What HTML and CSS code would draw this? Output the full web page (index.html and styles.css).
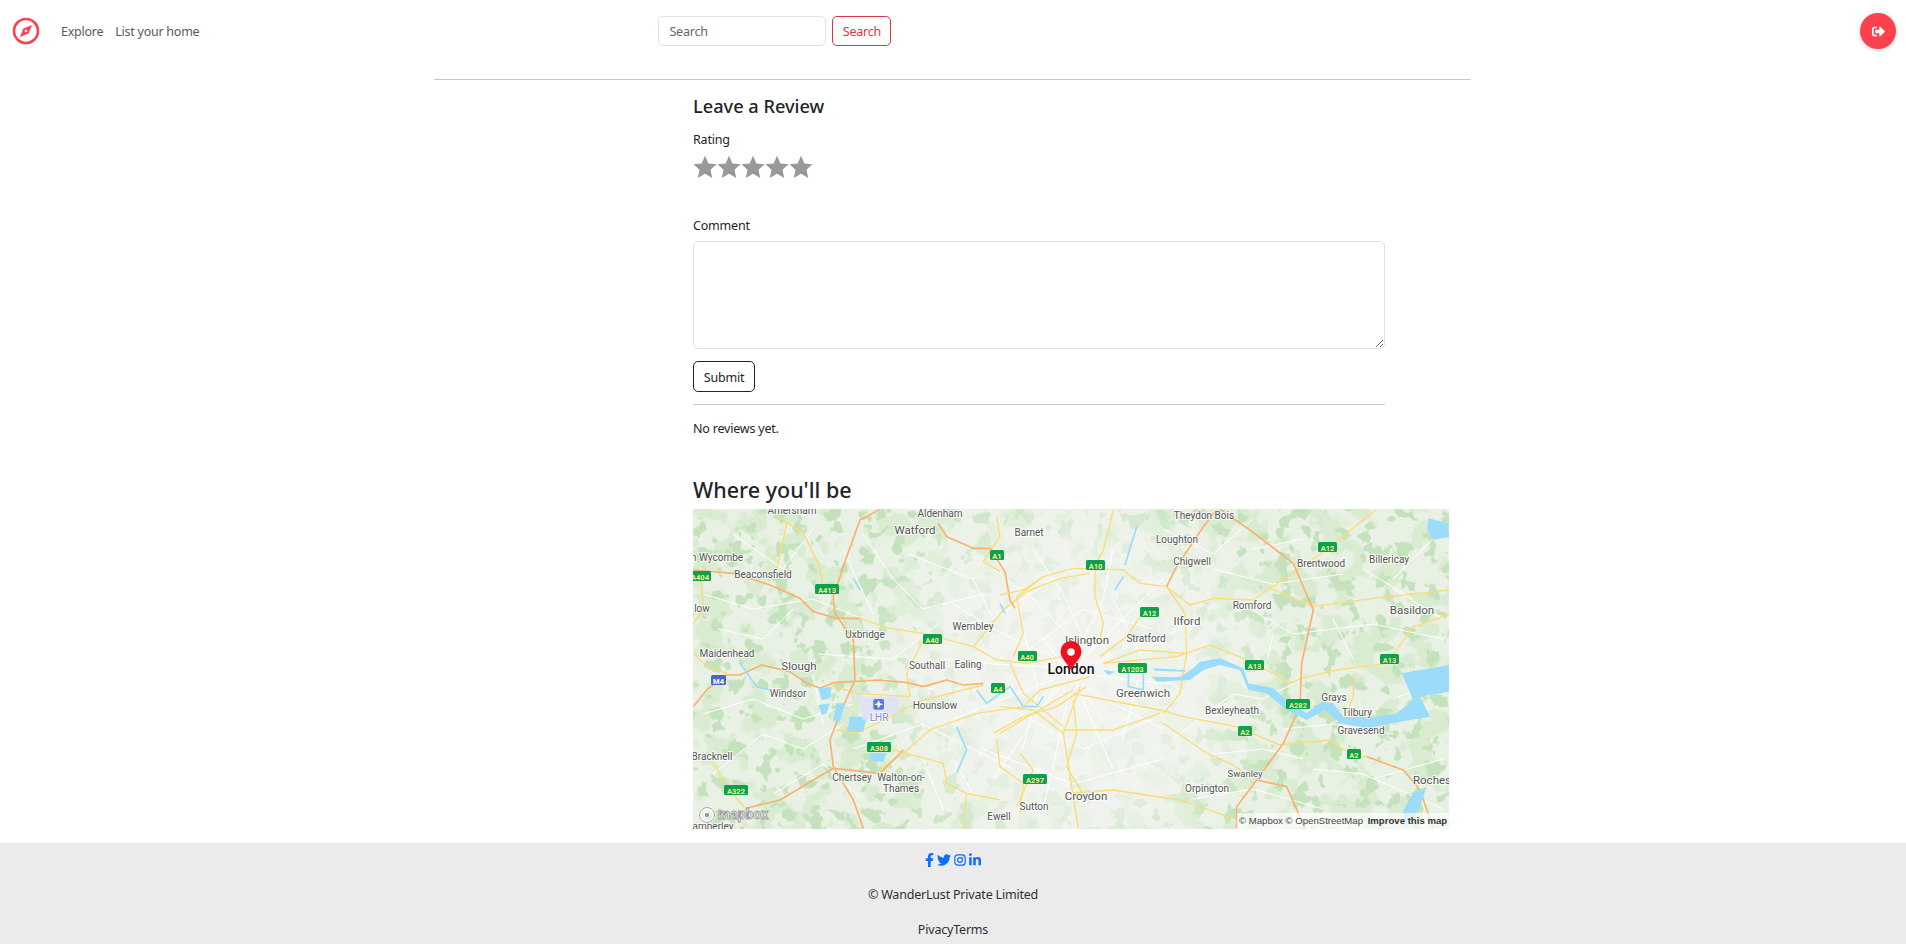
FILE: index.html
```html
<!DOCTYPE html>
<html lang="en">
<head>
    <meta charset="UTF-8">
    <title>Leave a Review</title>
    <link rel="stylesheet" href="styles.css">
</head>
<body>
    <nav class="navbar">
        <a class="brand" href="#">
            <svg viewBox="0 0 28 28" width="28" height="28">
                <circle cx="14" cy="14" r="12" fill="none" stroke="#fe424d" stroke-width="2.6"/>
                <path d="M20 8 L16.6 16.6 L8 20 L11.4 11.4 Z" fill="#fe424d"/>
                <circle cx="14" cy="14" r="1.3" fill="#fff"/>
            </svg>
        </a>
        <a class="nav-link" href="#">Explore</a>
        <a class="nav-link" href="#">List your home</a>
        <form class="search">
            <input class="search-input" type="text" placeholder="Search">
            <button class="search-btn" type="button">Search</button>
        </form>
        <a class="logout" href="#">
            <svg viewBox="0 0 512 512" width="13" height="13"><path fill="#fff" d="M497 273L329 441c-15 15-41 4.5-41-17v-96H152c-13.3 0-24-10.7-24-24v-96c0-13.3 10.7-24 24-24h136V88c0-21.4 25.9-32 41-17l168 168c9.3 9.4 9.3 24.6 0 34zM192 436v-40c0-6.6-5.4-12-12-12H96c-17.7 0-32-14.3-32-32V160c0-17.7 14.3-32 32-32h84c6.6 0 12-5.4 12-12V76c0-6.6-5.4-12-12-12H96c-53 0-96 43-96 96v192c0 53 43 96 96 96h84c6.6 0 12-5.4 12-12z"/></svg>
        </a>
    </nav>

    <main class="content">
        <hr class="top-line">
        <div class="column">
            <div class="review">
                <h4 class="review-title">Leave a Review</h4>
                <label class="field-label">Rating</label>
                <div class="stars">
                    <svg viewBox="0 0 24 24"><path d="M12 .8l3.4 7.6 8.2.9-6.1 5.5 1.7 8.1L12 18.8l-7.2 4.1 1.7-8.1L.4 9.3l8.2-.9z"/></svg>
                    <svg viewBox="0 0 24 24"><path d="M12 .8l3.4 7.6 8.2.9-6.1 5.5 1.7 8.1L12 18.8l-7.2 4.1 1.7-8.1L.4 9.3l8.2-.9z"/></svg>
                    <svg viewBox="0 0 24 24"><path d="M12 .8l3.4 7.6 8.2.9-6.1 5.5 1.7 8.1L12 18.8l-7.2 4.1 1.7-8.1L.4 9.3l8.2-.9z"/></svg>
                    <svg viewBox="0 0 24 24"><path d="M12 .8l3.4 7.6 8.2.9-6.1 5.5 1.7 8.1L12 18.8l-7.2 4.1 1.7-8.1L.4 9.3l8.2-.9z"/></svg>
                    <svg viewBox="0 0 24 24"><path d="M12 .8l3.4 7.6 8.2.9-6.1 5.5 1.7 8.1L12 18.8l-7.2 4.1 1.7-8.1L.4 9.3l8.2-.9z"/></svg>
                </div>
                <label class="field-label comment-label">Comment</label>
                <textarea class="comment-box"></textarea>
                <button class="submit-btn" type="button">Submit</button>
                <hr class="review-line">
                <p class="no-reviews">No reviews yet.</p>
            </div>
            <h3 class="map-title">Where you'll be</h3>
            <div class="map">
                <svg class="map-canvas" viewBox="0 0 756 320" width="756" height="320">
                    <defs>
                        <filter id="patches" x="0" y="0" width="100%" height="100%" color-interpolation-filters="sRGB">
                            <feTurbulence type="fractalNoise" baseFrequency="0.035" numOctaves="3" seed="7"/>
                            <feColorMatrix type="matrix" values="0 0 0 0 0.85  0 0 0 0 0.925  0 0 0 0 0.82  16 0 0 0 -8.3"/>
                        </filter>
                        <filter id="patches2" x="0" y="0" width="100%" height="100%" color-interpolation-filters="sRGB">
                            <feTurbulence type="fractalNoise" baseFrequency="0.06" numOctaves="3" seed="23"/>
                            <feColorMatrix type="matrix" values="0 0 0 0 0.77  0 0 0 0 0.89  0 0 0 0 0.74  18 0 0 0 -10.6"/>
                        </filter>
                        <radialGradient id="city" cx="378" cy="170" r="215" gradientUnits="userSpaceOnUse">
                            <stop offset="0" stop-color="#f5f5f3" stop-opacity=".92"/>
                            <stop offset=".6" stop-color="#f5f5f3" stop-opacity=".65"/>
                            <stop offset="1" stop-color="#f5f5f3" stop-opacity="0"/>
                        </radialGradient>
                    </defs>
                    <rect width="756" height="320" fill="#e9f1e4"/>
                    <rect width="756" height="320" filter="url(#patches)"/>
                    <rect width="756" height="320" filter="url(#patches2)"/>
                    <rect width="756" height="320" fill="url(#city)"/>

                    <!-- minor roads -->
                    <g class="minor">
                        <path d="M300 60 L340 90 L378 130 M340 40 L370 85 L395 140 M420 40 L410 90 L385 140 M470 70 L430 110 L395 145 M490 120 L430 140 L400 155 M480 175 L430 170 L395 165 M470 220 L420 195 L390 175 M420 260 L400 215 L385 180 M350 300 L365 235 L377 180 M300 270 L335 220 L365 175 M260 210 L310 190 L362 170 M250 150 L300 155 L360 158 M260 95 L310 125 L365 150"/>
                        <path d="M330 120 L345 180 L330 240 M420 90 L450 150 L430 230 M310 160 L390 100 L460 120 M320 200 L390 240 L460 210 M300 110 L360 70 L430 60 M290 240 L380 275 L470 250 M350 130 L410 210 M410 125 L345 205"/>
                        <path d="M40 25 L90 60 L120 20 M10 85 L60 100 L120 90 L170 110 M25 120 L70 130 L100 100 M10 205 L60 190 L110 210 L160 195 M20 265 L70 225 L110 240 L150 215 M80 285 L130 255 L170 290 M170 25 L200 70 L230 100 L290 85 M150 40 L180 105 M215 45 L280 70 L300 110 M125 145 L200 150 L245 115 M190 170 L240 180 M120 165 L130 215 M160 240 L230 215 L270 235 L320 260 M230 250 L250 300 M280 285 L260 250"/>
                        <path d="M470 20 L520 45 L560 10 M520 60 L580 75 L650 65 M560 40 L610 30 M540 90 L600 125 L680 115 L750 130 M580 125 L575 150 M640 110 L660 150 M700 70 L740 30 M700 80 L750 110 M670 60 L720 90 M480 230 L540 185 L570 190 L600 175 M520 245 L570 240 L610 250 M590 220 L640 215 L700 225 M620 260 L670 265 L750 300 M500 290 L560 280 L630 300 M680 270 L750 250 M700 190 L750 170"/>
                    </g>

                    <!-- west half, coordinates read off a 3x crop -->
                    <g transform="translate(-3,-9) scale(.3333)">
                        <g class="r-yellow">
                            <path d="M510 355 L600 385 L700 400 L850 440 L920 480 L1010 490 L1120 470"/>
                            <path d="M850 440 L940 330 L1010 275 L1110 235 L1200 220"/>
                            <path d="M265 50 L340 100 L385 190 L400 260 M290 70 L260 210"/>
                            <path d="M880 555 L700 600 L620 640 L500 700 L440 690"/>
                            <path d="M660 590 L500 580 L420 555 M660 590 L650 520 L700 420"/>
                            <path d="M920 50 L930 110 L880 185 L930 215 M10 370 L40 330 L35 240"/>
                            <path d="M1200 530 L1050 570 L1000 620 L860 640 L720 690 L640 760 L570 810"/>
                            <path d="M910 700 L1000 650 L1100 620 L1190 560 M920 720 L930 800 L1000 850 L990 940 M830 880 L820 985"/>
                            <path d="M610 750 L760 790 L770 850 L830 880 L930 900 M60 770 L110 860 L170 930 M1150 600 L1160 700 L1130 800 L1190 900"/>
                            <path d="M960 490 L1000 580 L1060 630 L1120 680"/>
                            <path d="M10 460 L50 500 L110 520"/>
                        </g>
                        <g class="r-orange">
                            <path d="M520 985 L490 900 L430 800 L420 720 L450 640 L495 540 L490 420 L435 340 L430 290 L470 170 L510 60 L570 28"/>
                            <path d="M10 620 L50 570 L110 525 L150 525 L215 495 L300 515 L350 550 L390 565 L430 548 L570 540 L650 548 L700 560 L770 540 L820 555 L880 550"/>
                            <path d="M10 210 L130 220 L240 255 L330 295 L370 335 L440 355 L510 355"/>
                            <path d="M745 70 L770 110 L850 145 L900 145 L945 215 L960 300 L975 325"/>
                            <path d="M170 925 L270 900 L370 840 L430 805 L570 820 L640 750"/>
                        </g>
                        <path class="r-water" d="M490 235 L510 270 M930 310 L945 340 M150 490 L200 560 L240 570"/>
                        <path class="water" d="M385 565 L425 560 L420 595 L395 600 Z M385 615 L420 610 L410 640 L395 645 Z M440 610 L465 610 L450 665 L430 660 Z M478 650 L530 650 L520 695 L475 695 Z M535 760 L590 760 L580 785 L550 785 Z"/>
                        <path class="r-water" d="M800 680 L830 750 L800 820 M860 570 L890 610 L960 560 L1000 620 L1040 620 L1060 590"/>
                        <path d="M505 590 L625 590 L625 640 L520 660 Z" fill="#dfe3f2"/>
                        <rect x="550" y="597" width="32" height="32" rx="6" fill="#5b78d8"/>
                        <path d="M566 600 L570 610 L580 613 L570 616 L566 626 L562 616 L552 613 L562 610 Z" fill="#fff"/>
                    </g>

                    <!-- east half -->
                    <g transform="translate(307,-9) scale(.3333)">
                        <g class="r-yellow">
                            <path d="M0 285 L70 270 L130 230 L220 205 L370 210 L420 250 L500 260 L570 315 L640 295 L760 300 L810 265 L940 320 L1120 295 L1347 270"/>
                            <path d="M310 490 L420 450 L560 460 M310 490 L530 470 L630 435 L740 480 L820 520 L870 550 L905 535 L1010 510 L1160 490 L1240 380 L1347 345"/>
                            <path d="M560 460 L555 340 L500 260 M560 460 L540 580 L490 640"/>
                            <path d="M220 580 L320 600 L480 630 L550 650 L710 680 L840 735 L990 720 L1060 770 L1100 770"/>
                            <path d="M240 560 L190 700 L235 985 M0 700 L100 640 L220 570 M0 620 L100 630 L190 700"/>
                            <path d="M490 670 L620 760 L690 790 L770 840"/>
                            <path d="M810 265 L950 170 L1040 100 L1127 30 M340 30 L310 150 L285 200 L285 290 L310 370 L300 420"/>
                            <path d="M190 690 L340 690 L480 640 M60 760 L100 810 L50 920 M200 880 L340 870 L540 900 L700 955"/>
                            <path d="M130 230 L50 290 L70 400 L40 470 M420 350 L380 410 L300 470 M1060 530 L1060 590 L1035 650"/>
                        </g>
                        <g class="r-orange">
                            <path d="M660 28 L750 90 L880 190 L940 330 L905 490 L900 620 L850 730 L770 840 L710 920 L710 985"/>
                            <path d="M500 260 L530 200 L610 80 L650 30"/>
                            <path d="M770 840 L860 860 L915 985 M1100 770 L1210 810 L1260 870 L1300 985"/>
                        </g>
                        <path class="r-water" d="M375 195 L410 80 M345 270 L370 230"/>
                        <path class="water" d="M310 510 L345 515 L325 525 Z M460 505 L555 510 L555 515 L465 512 Z M455 530 L540 532 L580 505 L600 485 L660 475 L730 505 L745 550 L820 565 L870 610 L920 640 L965 605 L1000 610 L1030 650 L1130 650 L1190 640 L1240 600 L1205 520 L1347 495 L1347 575 L1260 590 L1290 650 L1200 665 L1100 685 L1020 670 L975 630 L920 660 L860 630 L800 580 L745 570 L720 510 L660 495 L610 510 L570 540 L470 545 Z"/>
                        <path class="r-water" d="M385 515 L385 560 L430 570 L430 520"/>
                        <path class="water" d="M1285 55 L1345 70 L1347 110 L1300 120 L1282 90 Z M1240 880 L1280 860 L1260 920 L1215 985 L1210 930 Z"/>
                    </g>

                    <g class="shields">
                        <rect x="-8" y="62" width="26" height="10"/><text x="7" y="70.5">A404</text>
                        <rect x="122" y="75" width="24" height="10"/><text x="134" y="83.5">A413</text>
                        <rect x="297" y="41" width="14" height="10"/><text x="304" y="49.5">A1</text>
                        <rect x="230" y="125" width="19" height="10"/><text x="239" y="133.5">A40</text>
                        <rect x="325" y="142" width="19" height="10"/><text x="334" y="150.5">A40</text>
                        <rect x="298" y="174" width="14" height="10"/><text x="305" y="182.5">A4</text>
                        <rect class="blue" x="18" y="166" width="15" height="10"/><text x="25.500" y="174.500">M4</text>
                        <rect x="174" y="233" width="24" height="10"/><text x="186" y="241.500">A308</text>
                        <rect x="31" y="276" width="24" height="10"/><text x="43" y="284.500">A322</text>
                        <rect x="330" y="265" width="24" height="10"/><text x="342" y="273.500">A297</text>
                        <rect x="393" y="51" width="19" height="10"/><text x="402.500" y="59.500">A10</text>
                        <rect x="447" y="98" width="19" height="10"/><text x="456.500" y="106.500">A12</text>
                        <rect x="425" y="154" width="29" height="10"/><text x="439.500" y="162.500">A1203</text>
                        <rect x="552" y="151" width="19" height="10"/><text x="561.500" y="159.500">A13</text>
                        <rect x="593" y="190" width="24" height="10"/><text x="605" y="198.500">A282</text>
                        <rect x="545" y="217" width="14" height="10"/><text x="552" y="225.500">A2</text>
                        <rect x="654" y="240" width="14" height="10"/><text x="661" y="248.500">A2</text>
                        <rect x="625" y="33" width="19" height="10"/><text x="634.500" y="41.500">A12</text>
                        <rect x="687" y="145" width="19" height="10"/><text x="696.500" y="153.500">A13</text>
                    </g>

                    <g class="labels">
                        <text x="99" y="5">Amersham</text>
                        <text x="247" y="8">Aldenham</text>
                        <text class="lg" x="222" y="25">Watford</text>
                        <text x="336" y="27">Barnet</text>
                        <text x="24" y="52">h Wycombe</text>
                        <text x="70" y="69">Beaconsfield</text>
                        <text x="172" y="129">Uxbridge</text>
                        <text x="280" y="121">Wembley</text>
                        <text x="34" y="148">Maidenhead</text>
                        <text class="lg" x="106" y="161">Slough</text>
                        <text x="234" y="160">Southall</text>
                        <text x="275" y="159">Ealing</text>
                        <text x="95" y="188">Windsor</text>
                        <text x="242" y="200">Hounslow</text>
                        <text class="lhr" x="186" y="212">LHR</text>
                        <text x="19" y="251">Bracknell</text>
                        <text x="159" y="272">Chertsey</text>
                        <text x="208" y="272">Walton-on-</text>
                        <text x="208" y="283">Thames</text>
                        <text x="20" y="321">amberley</text>
                        <text x="306" y="311">Ewell</text>
                        <text x="341" y="301">Sutton</text>
                        <text class="lg" x="393" y="291">Croydon</text>
                        <text x="9" y="103">low</text>
                        <text x="511" y="10">Theydon Bois</text>
                        <text x="484" y="34">Loughton</text>
                        <text x="499" y="56">Chigwell</text>
                        <text x="628" y="58">Brentwood</text>
                        <text x="696" y="54">Billericay</text>
                        <text x="559" y="100">Romford</text>
                        <text class="lg" x="719" y="105">Basildon</text>
                        <text class="lg" x="494" y="116">Ilford</text>
                        <text x="453" y="133">Stratford</text>
                        <text class="lg" x="394" y="135">Islington</text>
                        <text class="lg" x="450" y="188">Greenwich</text>
                        <text x="641" y="192">Grays</text>
                        <text x="664" y="207">Tilbury</text>
                        <text x="668" y="225">Gravesend</text>
                        <text x="539" y="205">Bexleyheath</text>
                        <text class="sm" x="552" y="268">Swanley</text>
                        <text x="514" y="283">Orpington</text>
                        <text class="lg" x="739" y="275">Roches</text>
                        <text class="city" x="378" y="165">London</text>
                    </g>

                    <!-- marker -->
                    <path d="M378 161 C374 154 367.500 149 367.500 142.500 A10.500 10.500 0 0 1 388.500 142.500 C388.500 149 382 154 378 161 Z" fill="#f01020"/>
                    <circle cx="378" cy="143" r="3.800" fill="#fff"/>

                    <!-- mapbox logo -->
                    <circle cx="14" cy="306" r="7" fill="none" stroke="#fff" stroke-width="3.500"/>
                    <circle cx="14" cy="306" r="7.500" fill="none" stroke="#888" stroke-width=".8"/>
                    <circle cx="14" cy="306" r="2.800" fill="#999" stroke="#fff"/>
                    <text class="logo-text" x="25" y="310">mapbox</text>
                </svg>
                <div class="attribution">© Mapbox © OpenStreetMap <b>Improve this map</b></div>
            </div>
        </div>
    </main>

    <footer class="footer">
        <div class="socials">
            <svg viewBox="0 0 320 512" width="9" height="14"><path d="M279.14 288l14.22-92.66h-88.91v-60.13c0-25.35 12.42-50.06 52.24-50.06h40.42V6.26S260.43 0 225.36 0c-73.22 0-121.08 44.38-121.08 124.72v70.62H22.89V288h81.39v224h100.17V288z"/></svg>
            <svg viewBox="0 0 512 512" width="14" height="14"><path d="M459.37 151.716c.325 4.548.325 9.097.325 13.645 0 138.72-105.583 298.558-298.558 298.558-59.452 0-114.68-17.219-161.137-47.106 8.447.974 16.568 1.299 25.34 1.299 49.055 0 94.213-16.568 130.274-44.832-46.132-.975-84.792-31.188-98.112-72.772 6.498.974 12.995 1.624 19.818 1.624 9.421 0 18.843-1.3 27.614-3.573-48.081-9.747-84.143-51.98-84.143-102.985v-1.299c13.969 7.797 30.214 12.67 47.431 13.319-28.264-18.843-46.781-51.005-46.781-87.391 0-19.492 5.197-37.36 14.294-52.954 51.655 63.675 129.3 105.258 216.365 109.807-1.624-7.797-2.599-15.918-2.599-24.04 0-57.828 46.782-104.934 104.934-104.934 30.213 0 57.502 12.67 76.67 33.137 23.715-4.548 46.456-13.32 66.599-25.34-7.798 24.366-24.366 44.833-46.132 57.827 21.117-2.273 41.584-8.122 60.426-16.243-14.292 20.791-32.161 39.308-52.628 54.253z"/></svg>
            <svg viewBox="0 0 14 14" width="12" height="14"><rect class="ig" x="1" y="1" width="12" height="12" rx="3.200"/><circle class="ig" cx="7" cy="7" r="2.800"/><circle cx="10.400" cy="3.600" r=".8"/></svg>
            <svg viewBox="0 0 448 512" width="12" height="14"><path d="M100.28 448H7.4V148.9h92.88zM53.79 108.1C24.09 108.1 0 83.5 0 53.8a53.79 53.79 0 0 1 107.58 0c0 29.7-24.1 54.3-53.79 54.3zM447.9 448h-92.68V302.4c0-34.7-.7-79.2-48.29-79.2-48.29 0-55.69 37.7-55.69 76.7V448h-92.78V148.9h89.08v40.8h1.3c12.4-23.5 42.69-48.3 87.88-48.3 94 0 111.28 61.9 111.28 142.3V448z"/></svg>
        </div>
        <div class="copyright">© WanderLust Private Limited</div>
        <div class="links"><a href="#">Pivacy</a><a href="#">Terms</a></div>
    </footer>
</body>
</html>
```

FILE: styles.css
```css
* {
    box-sizing: border-box;
}
body {
    margin: 0;
    height: 944px;
    overflow: hidden;
    display: flex;
    flex-direction: column;
    font-family: "Noto Sans", "Liberation Sans", sans-serif;
    font-size: 12.5px;
    letter-spacing: -.2px;
    color: #212529;
    background: #fff;
}
a {
    text-decoration: none;
    color: inherit;
}

/* navbar */
.navbar {
    display: flex;
    align-items: center;
    height: 62px;
    padding: 0 10px 0 12px;
}
.brand {
    display: flex;
    width: 49px;
}
.nav-link {
    color: #555b61;
    margin-right: 12px;
    letter-spacing: -.25px;
}
.search {
    display: flex;
    gap: 6px;
    margin-left: 447px;
}
.search-input {
    width: 168px;
    height: 30px;
    padding: 0 10px;
    border: 1px solid #dee2e6;
    border-radius: 5px;
    font: inherit;
    letter-spacing: inherit;
}
.search-input::placeholder {
    color: #60666c;
    opacity: 1;
}
.search-btn {
    width: 59px;
    height: 30px;
    padding: 0;
    border: 1px solid #dc3545;
    border-radius: 5px;
    background: #fff;
    color: #dc3545;
    font: inherit;
    letter-spacing: inherit;
}
.logout {
    display: flex;
    align-items: center;
    justify-content: center;
    width: 36px;
    height: 36px;
    margin-left: auto;
    border-radius: 50%;
    background: #fe424d;
    box-shadow: 0 1px 4px rgba(0,0,0,.2);
}

/* main */
.content {
    width: 1037px;
    margin: 0 0 0 434px;
    flex: 1;
}
.top-line {
    margin: 17px 0 0;
    border: 0;
    border-top: 1px solid #c9c9c9;
}
.column {
    margin-left: 259px;
}
.review {
    width: 692px;
}
.review-title {
    margin: 14px 0 0;
    font-size: 18.2px;
    font-weight: 500;
    line-height: 24px;
    letter-spacing: 0;
}
.field-label {
    display: block;
    line-height: 18px;
}
.review-title + .field-label {
    margin-top: 13px;
}
.stars {
    display: flex;
    height: 24px;
    margin-top: 6px;
}
.stars svg {
    width: 24px;
    height: 24px;
    fill: #999;
}
.comment-label {
    margin-top: 38px;
}
.comment-box {
    display: block;
    width: 100%;
    height: 108px;
    margin-top: 6px;
    border: 1px solid #dee2e6;
    border-radius: 5px;
}
.submit-btn {
    display: block;
    width: 62px;
    height: 31px;
    margin-top: 12px;
    padding: 1px 0 0;
    border: 1px solid #212529;
    border-radius: 5px;
    background: #fff;
    color: #212529;
    font: inherit;
    letter-spacing: inherit;
}
.review-line {
    margin: 12px 0 0;
    border: 0;
    border-top: 1px solid #c9c9c9;
}
.no-reviews {
    margin: 15px 0 0;
    line-height: 18px;
}
.map-title {
    margin: 37px 0 0;
    font-size: 21.5px;
    font-weight: 500;
    line-height: 30px;
    letter-spacing: 0;
}
.map {
    position: relative;
    width: 756px;
    height: 320px;
    margin-top: 4px;
    overflow: hidden;
}
.map-canvas {
    display: block;
}
.attribution {
    position: absolute;
    right: 0;
    bottom: 0;
    width: 212px;
    height: 16px;
    padding-left: 2px;
    background: rgba(255,255,255,.65);
    font-family: "Liberation Sans", sans-serif;
    font-size: 9.6px;
    letter-spacing: 0;
    line-height: 16px;
    white-space: nowrap;
    color: #444;
}
.attribution b {
    color: #333;
    margin-left: 2px;
}

/* map drawing */
.minor path {
    fill: none;
    stroke: #fff;
    stroke-width: 1;
    stroke-linejoin: round;
}
.r-yellow path {
    fill: none;
    stroke: #fbdc75;
    stroke-width: 4;
    stroke-linejoin: round;
}
.r-orange path {
    fill: none;
    stroke: #f9b26e;
    stroke-width: 5;
    stroke-linejoin: round;
}
.water {
    fill: #9bdcfb;
}
.r-water {
    fill: none;
    stroke: #9bdcfb;
    stroke-width: 5;
}
.shields rect {
    fill: #0e9f4f;
    rx: 1.5px;
}
.shields rect.blue {
    fill: #4a68c8;
}
.shields text {
    font-family: Roboto, sans-serif;
    font-size: 7.5px;
    font-weight: 700;
    letter-spacing: 0;
    text-anchor: middle;
    fill: #f1ee8e;
}
.shields rect.blue + text {
    fill: #fff;
}
.labels text {
    font-family: Roboto, sans-serif;
    font-size: 10px;
    letter-spacing: 0;
    text-anchor: middle;
    fill: #555;
    stroke: #fff;
    stroke-width: 2px;
    stroke-opacity: .75;
    paint-order: stroke;
}
.labels .sm {
    font-size: 9.5px;
}
.labels .lg {
    font-size: 11.5px;
}
.labels .lhr {
    fill: #7d8fd8;
}
.labels .city {
    font-size: 14px;
    font-weight: 500;
    fill: #111;
}
.logo-text {
    font-family: Roboto, sans-serif;
    font-size: 14px;
    font-weight: 700;
    letter-spacing: 0;
    fill: #eee;
    stroke: #999;
    stroke-width: .8px;
}

/* footer */
.footer {
    height: 101px;
    background: #ebebeb;
    text-align: center;
    color: #2c3036;
}
.socials {
    display: flex;
    justify-content: center;
    align-items: center;
    gap: 3px;
    height: 14px;
    margin-top: 10px;
}
.socials svg {
    fill: #0d6efd;
}
.socials .ig {
    fill: none;
    stroke: #0d6efd;
    stroke-width: 1.4;
}
.copyright {
    margin-top: 19px;
    line-height: 18px;
}
.links {
    margin-top: 17px;
    line-height: 18px;
}
```
